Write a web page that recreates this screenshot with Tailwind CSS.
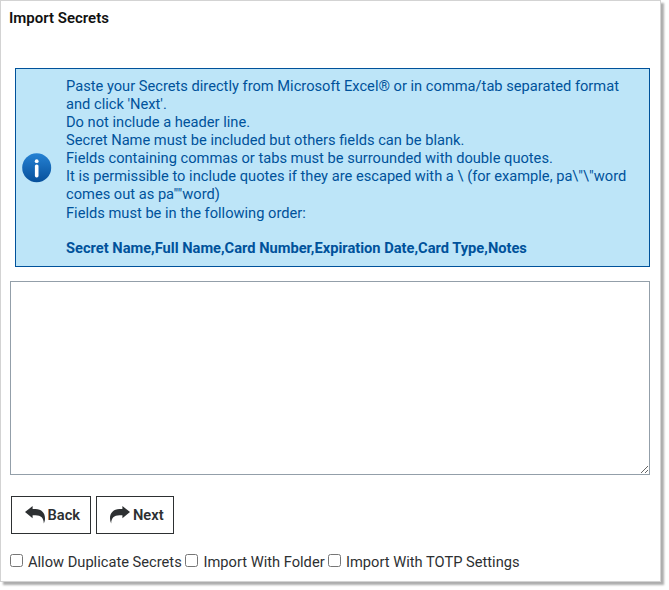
<!DOCTYPE html>
<html lang="en">
<head>
<meta charset="utf-8">
<title>Import Secrets</title>
<script src="https://cdn.jsdelivr.net/npm/@tailwindcss/browser@4"></script>
</head>
<body class="bg-white font-[Roboto,sans-serif] h-[590px]">
<main class="w-[661px] h-[582px] border border-[#d3d3d3] shadow-[3px_3px_2px_0px_#adadad] flex flex-col bg-white">
  <h1 class="pl-2 pt-[8px] text-[15px] leading-[19px] font-semibold text-[#111]">Import Secrets</h1>
  <section class="mt-10 ml-[14px] w-[635px] h-[199px] shrink-0 border border-[#00529b] bg-[#bde5f8] text-[#00529b] flex items-center pl-[6px]">
    <svg class="w-[30px] h-[30px] shrink-0" viewBox="0 0 30 30">
      <defs><linearGradient id="g" x1="0" y1="0" x2="0" y2="1"><stop offset="0" stop-color="#2582d4"/><stop offset="1" stop-color="#07509b"/></linearGradient></defs>
      <circle cx="14.700" cy="14.700" r="14.500" fill="url(#g)"/>
      <circle cx="14.700" cy="8.200" r="1.900" fill="#fff"/>
      <rect x="12.900" y="11.400" width="3.600" height="13" rx="1.600" fill="#fff"/>
    </svg>
    <div class="ml-[14px] pb-[2px] text-[14.667px] leading-[18px] whitespace-nowrap">
      <p>Paste your Secrets directly from Microsoft Excel® or in comma/tab separated format<br>and click 'Next'.</p>
      <p>Do not include a header line.</p>
      <p>Secret Name must be included but others fields can be blank.</p>
      <p>Fields containing commas or tabs must be surrounded with double quotes.</p>
      <p>It is permissible to include quotes if they are escaped with a \ (for example, pa\"\"word<br>comes out as pa""word)</p>
      <p class="mt-px">Fields must be in the following order:</p>
      <p class="mt-[17px] font-bold">Secret Name,Full Name,Card Number,Expiration Date,Card Type,Notes</p>
    </div>
  </section>
  <textarea class="mt-[14px] ml-[9px] w-[640px] h-[194px] shrink-0 border border-[#939fa9] bg-white resize"></textarea>
  <div class="mt-[21px] ml-[10px] flex gap-[5px] text-[14.667px] font-semibold text-[#2d3032]">
    <button class="w-20 h-[38px] border border-[#2d3032] flex items-center pl-[13px] gap-[2.500px]">
      <svg class="w-[20px] h-[18px] shrink-0" viewBox="0 0 20 18" fill="#2d3032"><path d="M0 6.100 7.600 0V3.100H10.500C16.500 3.300 20 7 20 12.300 20 14.300 19.600 16 18.800 17.400 18.800 12 16 9.200 10.500 9.200H7.600V12.300Z"/></svg>
      <span>Back</span>
    </button>
    <button class="w-[78px] h-[38px] border border-[#2d3032] flex items-center pl-[13px] gap-[3px]">
      <svg class="w-[20px] h-[18px] shrink-0" viewBox="0 0 20 18" fill="#2d3032"><path d="M20 6.100 12.400 0V3.100H9.500C3.500 3.300 0 7 0 12.300 0 14.300.4 16 1.200 17.400 1.200 12 4 9.200 9.500 9.200H12.400V12.300Z"/></svg>
      <span>Next</span>
    </button>
  </div>
  <div class="mt-[18px] ml-[9px] h-[20px] flex items-center text-[14.667px] text-[#2d3032] whitespace-nowrap">
    <label class="flex items-center w-[175px]"><input type="checkbox" class="w-[13px] h-[13px] mr-[5px] -mt-[3px]">Allow Duplicate Secrets</label>
    <label class="flex items-center w-[143px]"><input type="checkbox" class="w-[13px] h-[13px] mr-[5.500px] -mt-[3px]">Import With Folder</label>
    <label class="flex items-center"><input type="checkbox" class="w-[13px] h-[13px] mr-[5px] -mt-[3px]">Import With TOTP Settings</label>
  </div>
</main>
</body>
</html>
